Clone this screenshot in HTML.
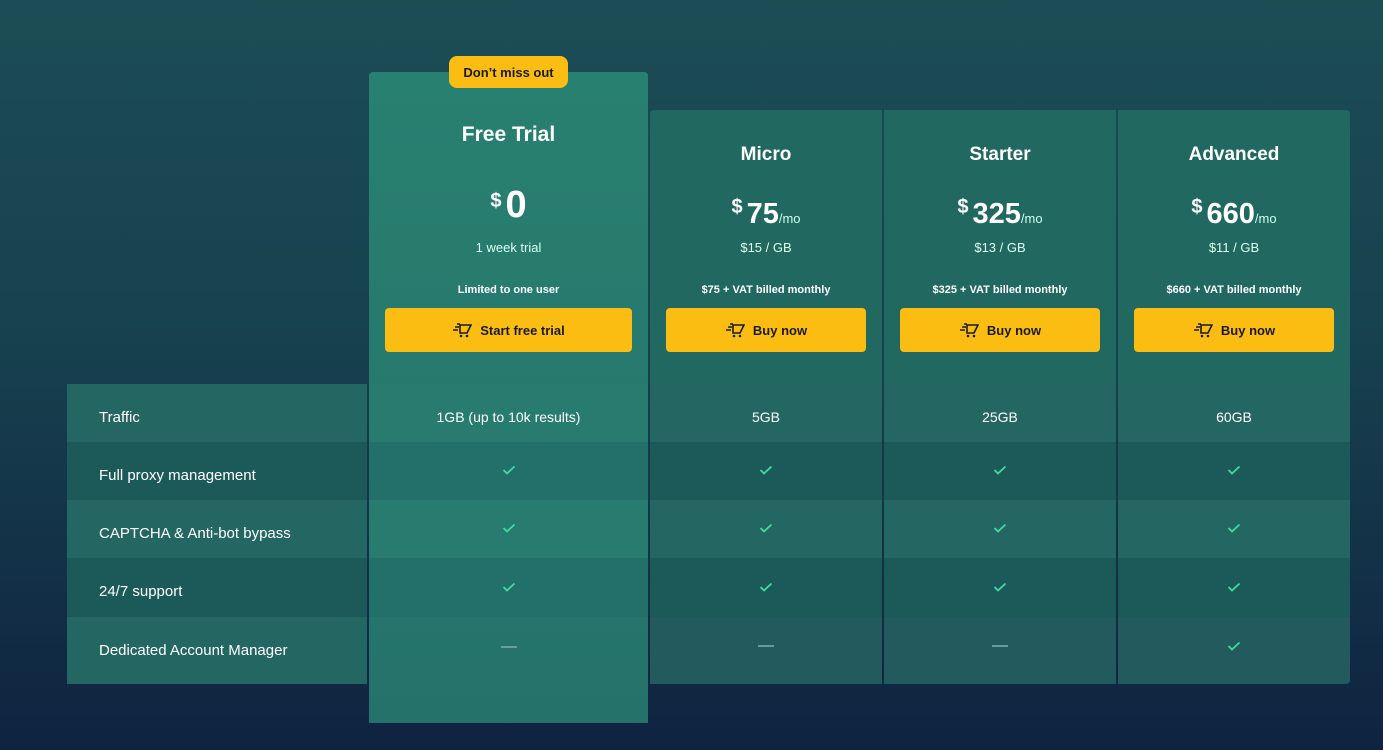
<!DOCTYPE html>
<html><head><meta charset="utf-8"><style>
*{margin:0;padding:0;box-sizing:border-box}
body{width:1383px;height:750px;overflow:hidden;background:linear-gradient(180deg,#1c4d55 0%,#17414f 45%,#0f2340 100%);font-family:"Liberation Sans",sans-serif;color:#fff;position:relative}
.a{position:absolute}
.card{position:absolute;background:#216860}
.free{background:linear-gradient(180deg,#288070 0%,#25726a 100%)}
.row{position:absolute;height:58px;display:flex;align-items:center;justify-content:center;font-size:14px}
.row svg{margin-top:-2px!important}
.l{background:#246662}.d{background:#1c5a5a}
.fl{background:#287b6f}.fd{background:#23706a}
.lab{justify-content:flex-start;padding-left:32px;font-size:15px}
.tx{padding-top:8px}
.t{position:absolute;text-align:center;width:100%}
.btn{position:absolute;background:#fbbd12;border-radius:4px;color:#1a1a1a;font-weight:bold;font-size:13px;display:flex;align-items:center;justify-content:center;gap:8px;height:44px}
.pr{font-size:29px;font-weight:bold}
.pr sup{font-size:20px;vertical-align:10px;margin-right:4px}
.pr small{font-size:13px;font-weight:normal;color:#cfe}
</style></head><body>
<svg width="0" height="0" style="position:absolute"><defs>
<symbol id="ck" viewBox="0 0 14 10"><path d="M1.5 5l3.5 3.5L12.5 1.5" fill="none" stroke="#3fdca0" stroke-width="1.8"/></symbol>
<symbol id="ct" viewBox="0 0 20 16"><path d="M5 2h3M3 5h4M1 8h5M8 3h11l-4 8H8z M8 11v-8" fill="none" stroke="#1a1a1a" stroke-width="1.6"/><circle cx="9" cy="14" r="1.3" fill="#1a1a1a"/><circle cx="15" cy="14" r="1.3" fill="#1a1a1a"/></symbol>
</defs></svg>

<div class="card free" style="left:369px;top:72px;width:279px;height:651px;border-radius:4px 4px 0 0"></div>
<div class="card" style="left:650px;top:110px;width:232px;height:574px;border-radius:4px 0 0 0"></div>
<div class="card" style="left:884px;top:110px;width:232px;height:574px"></div>
<div class="card" style="left:1118px;top:110px;width:232px;height:574px;border-radius:0 4px 4px 0"></div>

<div class="a" style="left:449px;top:56px;width:119px;height:32px;background:#fbbd12;border-radius:8px;color:#1a1a1a;font-weight:bold;font-size:13px;display:flex;align-items:center;justify-content:center">Don’t miss out</div>

<div class="a" style="left:369px;top:72px;width:279px;height:300px">
<div class="t" style="top:51px;font-size:21px;font-weight:bold">Free Trial</div>
<div class="t pr" style="top:112px;font-size:38px"><sup>$</sup>0</div>
<div class="t" style="top:168px;font-size:13px;color:#dfe">1 week trial</div>
<div class="t" style="top:212px;font-size:11px;font-weight:bold">Limited to one user</div>
<div class="btn" style="left:16px;top:236px;width:247px"><svg width="20" height="16"><use href="#ct"/></svg>Start free trial</div>
</div>
<div class="a" style="left:650px;top:110px;width:232px;height:260px">
<div class="t" style="top:34px;font-size:19px;font-weight:bold">Micro</div>
<div class="t pr" style="top:86px"><sup>$</sup>75<small>/mo</small></div>
<div class="t" style="top:130px;font-size:13px;color:#dfe">$15 / GB</div>
<div class="t" style="top:174px;font-size:11px;font-weight:bold">$75 + VAT billed monthly</div>
<div class="btn" style="left:16px;top:198px;width:200px"><svg width="20" height="16"><use href="#ct"/></svg>Buy now</div>
</div>
<div class="a" style="left:884px;top:110px;width:232px;height:260px">
<div class="t" style="top:34px;font-size:19px;font-weight:bold">Starter</div>
<div class="t pr" style="top:86px"><sup>$</sup>325<small>/mo</small></div>
<div class="t" style="top:130px;font-size:13px;color:#dfe">$13 / GB</div>
<div class="t" style="top:174px;font-size:11px;font-weight:bold">$325 + VAT billed monthly</div>
<div class="btn" style="left:16px;top:198px;width:200px"><svg width="20" height="16"><use href="#ct"/></svg>Buy now</div>
</div>
<div class="a" style="left:1118px;top:110px;width:232px;height:260px">
<div class="t" style="top:34px;font-size:19px;font-weight:bold">Advanced</div>
<div class="t pr" style="top:86px"><sup>$</sup>660<small>/mo</small></div>
<div class="t" style="top:130px;font-size:13px;color:#dfe">$11 / GB</div>
<div class="t" style="top:174px;font-size:11px;font-weight:bold">$660 + VAT billed monthly</div>
<div class="btn" style="left:16px;top:198px;width:200px"><svg width="20" height="16"><use href="#ct"/></svg>Buy now</div>
</div>

<div class="row l lab tx" style="left:67px;top:384px;width:300px">Traffic</div>
<div class="row d lab tx" style="left:67px;top:442px;width:300px">Full proxy management</div>
<div class="row l lab tx" style="left:67px;top:500px;width:300px">CAPTCHA &amp; Anti-bot bypass</div>
<div class="row d lab tx" style="left:67px;top:558px;width:300px;height:59px">24/7 support</div>
<div class="row l lab" style="left:67px;top:617px;width:300px;height:67px">Dedicated Account Manager</div>

<div class="row fl tx" style="left:369px;top:384px;width:279px">1GB (up to 10k results)</div>
<div class="row fd" style="left:369px;top:442px;width:279px"><svg width="14" height="10"><use href="#ck"/></svg></div>
<div class="row fl" style="left:369px;top:500px;width:279px"><svg width="14" height="10"><use href="#ck"/></svg></div>
<div class="row fd" style="left:369px;top:558px;width:279px;height:59px"><svg width="14" height="10"><use href="#ck"/></svg></div>
<div class="row" style="left:369px;top:617px;width:279px;height:67px"><div style="width:16px;height:2px;background:#6aa09a;margin-top:-8px"></div></div>

<div class="row l tx" style="left:650px;top:384px;width:232px">5GB</div>
<div class="row l tx" style="left:884px;top:384px;width:232px">25GB</div>
<div class="row l tx" style="left:1118px;top:384px;width:232px">60GB</div>
<div class="row d" style="left:650px;top:442px;width:232px"><svg width="14" height="10"><use href="#ck"/></svg></div>
<div class="row d" style="left:884px;top:442px;width:232px"><svg width="14" height="10"><use href="#ck"/></svg></div>
<div class="row d" style="left:1118px;top:442px;width:232px"><svg width="14" height="10"><use href="#ck"/></svg></div>
<div class="row l" style="left:650px;top:500px;width:232px"><svg width="14" height="10"><use href="#ck"/></svg></div>
<div class="row l" style="left:884px;top:500px;width:232px"><svg width="14" height="10"><use href="#ck"/></svg></div>
<div class="row l" style="left:1118px;top:500px;width:232px"><svg width="14" height="10"><use href="#ck"/></svg></div>
<div class="row d" style="left:650px;top:558px;width:232px;height:59px"><svg width="14" height="10"><use href="#ck"/></svg></div>
<div class="row d" style="left:884px;top:558px;width:232px;height:59px"><svg width="14" height="10"><use href="#ck"/></svg></div>
<div class="row d" style="left:1118px;top:558px;width:232px;height:59px"><svg width="14" height="10"><use href="#ck"/></svg></div>
<div class="row l" style="left:650px;top:617px;width:232px;height:67px;background:#225a5e"><div style="width:16px;height:2px;background:#6a9a98;margin-top:-10px"></div></div>
<div class="row l" style="left:884px;top:617px;width:232px;height:67px;background:#225a5e"><div style="width:16px;height:2px;background:#6a9a98;margin-top:-10px"></div></div>
<div class="row l" style="left:1118px;top:617px;width:232px;height:67px;background:#225a5e;border-radius:0 0 4px 0;padding-bottom:8px"><svg width="14" height="10"><use href="#ck"/></svg></div>
</body></html>
